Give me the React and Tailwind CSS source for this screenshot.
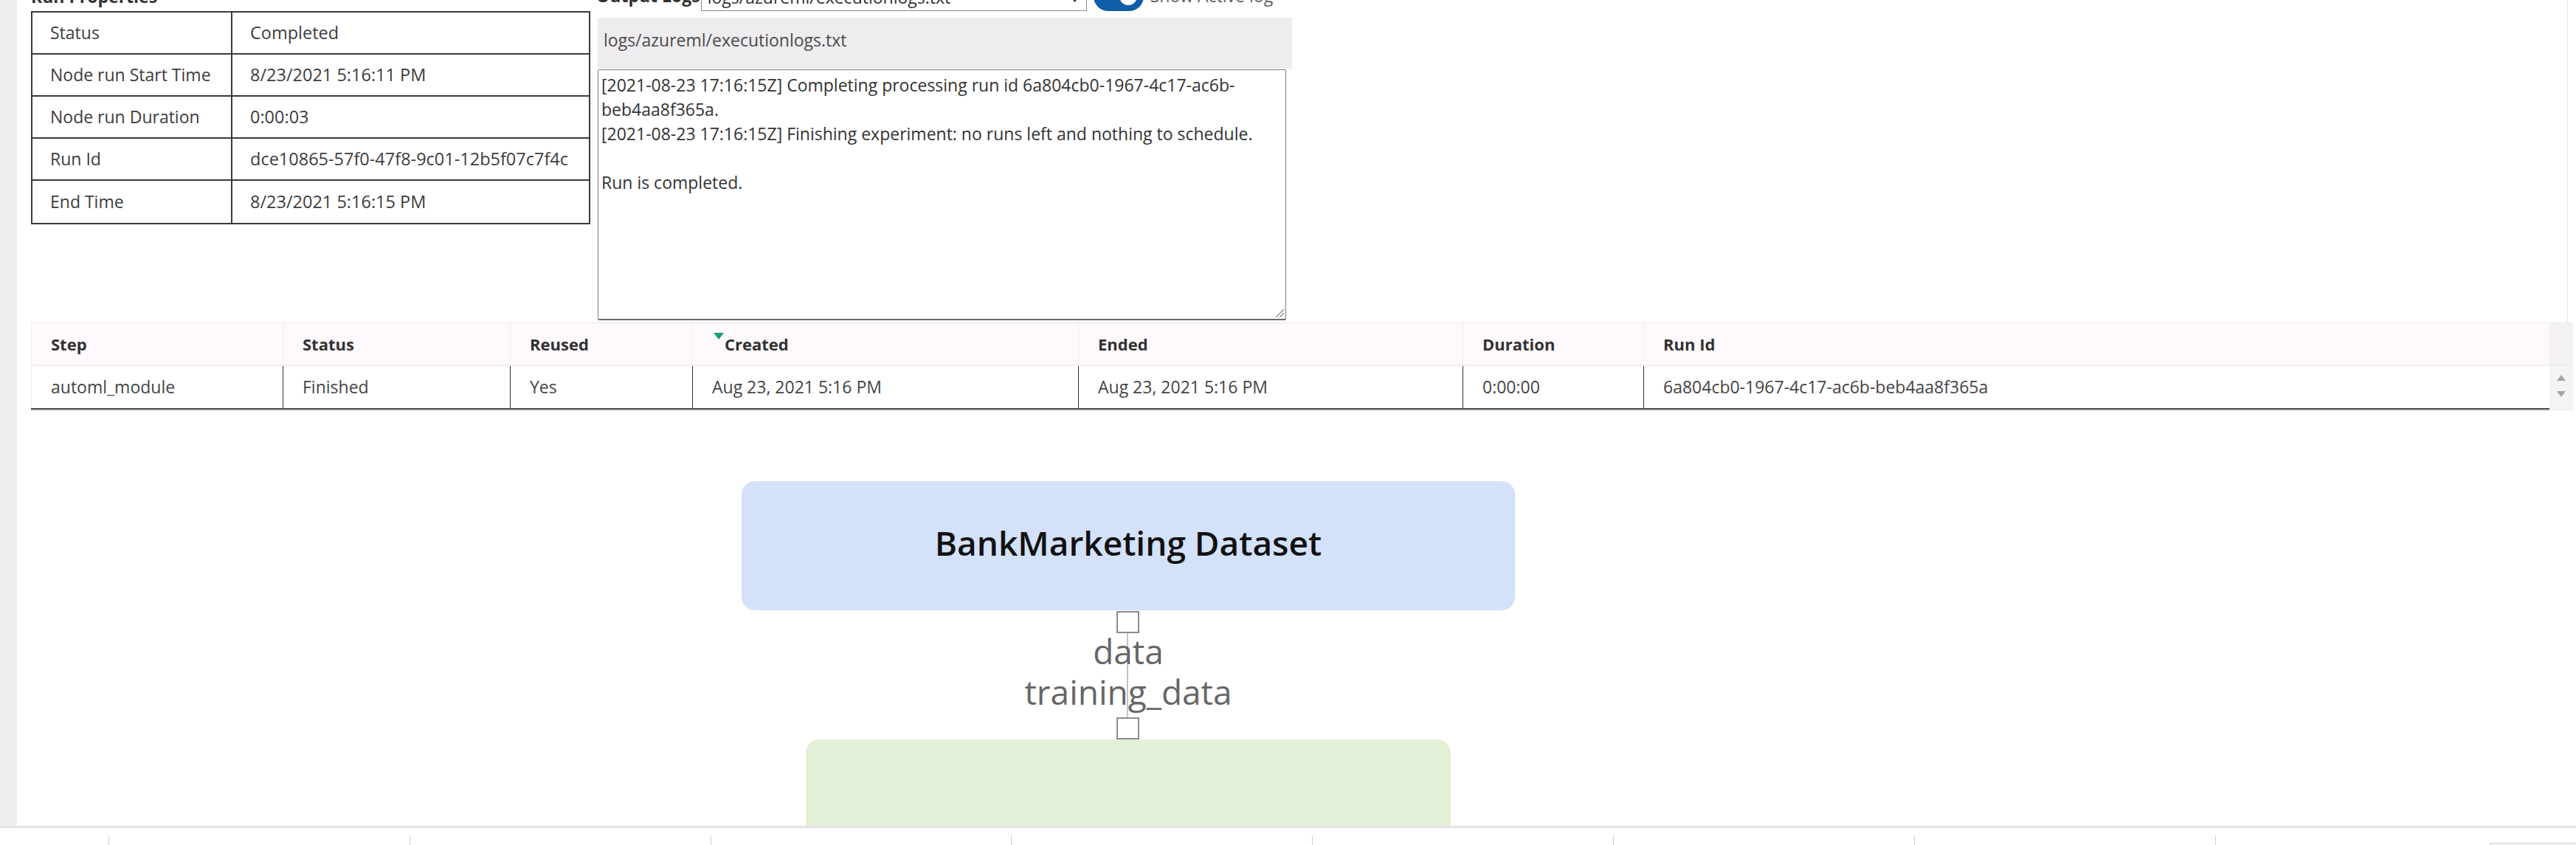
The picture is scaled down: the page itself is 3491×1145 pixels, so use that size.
import React from "react";

const runProps = [
  ["Status", "Completed"],
  ["Node run Start Time", "8/23/2021 5:16:11 PM"],
  ["Node run Duration", "0:00:03"],
  ["Run Id", "dce10865-57f0-47f8-9c01-12b5f07c7f4c"],
  ["End Time", "8/23/2021 5:16:15 PM"],
];

const logLines = [
  "[2021-08-23 17:16:15Z] Completing processing run id 6a804cb0-1967-4c17-ac6b-",
  "beb4aa8f365a.",
  "[2021-08-23 17:16:15Z] Finishing experiment: no runs left and nothing to schedule.",
  "\u00a0",
  "Run is completed.",
];

const headers = ["Step", "Status", "Reused", "Created", "Ended", "Duration", "Run Id"];
const row = [
  "automl_module",
  "Finished",
  "Yes",
  "Aug 23, 2021 5:16 PM",
  "Aug 23, 2021 5:16 PM",
  "0:00:00",
  "6a804cb0-1967-4c17-ac6b-beb4aa8f365a",
];

function RunProperties() {
  return (
    <div className="w-[758px] flex flex-col shrink-0">
      <div className="-mt-[20px] h-[35px] leading-[30px] font-bold text-[#323130]">Run Properties</div>
      <div className="border-2 border-[#3a3a3a] flex flex-col">
        {runProps.map(([k, v], i) => (
          <div
            key={k}
            className={`flex h-[57px] ${i < runProps.length - 1 ? "border-b-2 border-[#3a3a3a]" : ""}`}
          >
            <div className="w-[271px] border-r-2 border-[#3a3a3a] flex items-center pl-[24px] whitespace-nowrap">
              {k}
            </div>
            <div className="flex-1 flex items-center pl-[24px] whitespace-nowrap text-[23.5px]">{v}</div>
          </div>
        ))}
      </div>
    </div>
  );
}

function OutputLogs() {
  return (
    <div className="ml-[8px] w-[943px] flex flex-col shrink-0">
      <div className="-mt-[25px] h-[40px] flex items-start">
        <span className="mt-[4px] leading-[30px] font-bold text-[#323130] whitespace-nowrap">Output Logs</span>
        <div className="ml-[1px] w-[523px] h-[40px] border border-[#8a8886] bg-white relative pl-[8px] pt-[3px]">
          <span className="leading-[30px] text-[#323130] whitespace-nowrap">logs/azureml/executionlogs.txt</span>
          <svg className="absolute right-[10px] top-[20px]" width="11" height="8" viewBox="0 0 11 8">
            <path d="M0 0 L11 0 L5.5 7 Z" fill="#333" />
          </svg>
        </div>
        <div className="ml-[9px] w-[68px] h-[40px] rounded-full bg-[#0f5fa8] relative shrink-0">
          <div className="absolute right-[9px] top-[8px] w-[24px] h-[24px] rounded-full bg-white" />
        </div>
        <span className="ml-[9px] mt-[4px] leading-[30px] text-[#605e5c] whitespace-nowrap">Show Active log</span>
      </div>
      <div className="mt-[9px] ml-[2px] w-[941px] h-[69px] bg-[#eeecef] pl-[8px] pt-[13px]">
        <span className="leading-[30px] text-[#4a4a4a]">logs/azureml/executionlogs.txt</span>
      </div>
      <div className="relative ml-[2px] mt-[1px] w-[933px] h-[340px] border border-[#7c7c7c] border-b-2 border-b-[#6a6a6a] rounded-[2px] bg-white pl-[4px] pt-[4px]">
        {logLines.map((l, i) => (
          <div key={i} className="leading-[33px] whitespace-nowrap text-[#333]">
            {l}
          </div>
        ))}
        <svg className="absolute right-[1px] bottom-[1px]" width="14" height="14" viewBox="0 0 14 14">
          <line x1="13" y1="2" x2="2" y2="13" stroke="#8a8a8a" strokeWidth="1.2" />
          <line x1="13" y1="7" x2="7" y2="13" stroke="#8a8a8a" strokeWidth="1.2" />
        </svg>
      </div>
    </div>
  );
}

function StepsTable() {
  const cols = "grid grid-cols-[341px_308px_247px_523px_521px_245px_1fr]";
  return (
    <div className="h-[120px] flex pl-[19px] shrink-0">
      <div className="w-[3413px] flex flex-col">
        <div className={`${cols} h-[59px] bg-[#fdf9fd] border-t border-[#ebe8ec] border-b-2 border-b-[#efecf0]`}>
          {headers.map((h, i) => (
            <div
              key={h}
              className={`flex items-center font-bold text-[22px] text-[#323130] border-l border-[#efebef] ${
                i === 3 ? "pl-[28px]" : "pl-[26px]"
              }`}
            >
              {i === 3 && (
                <svg className="-mt-[22px] mr-[1px] shrink-0" width="14" height="9" viewBox="0 0 14 9">
                  <path d="M0 0 L14 0 L7 9 Z" fill="#16a06a" />
                </svg>
              )}
              <span className="whitespace-nowrap">{h}</span>
            </div>
          ))}
        </div>
        <div className={`${cols} h-[59px] border-b-2 border-[#4a4a4a] bg-white`}>
          {row.map((c, i) => (
            <div
              key={i}
              className={`flex items-center pl-[26px] text-[#444] whitespace-nowrap border-l ${
                i === 0 ? "border-[#efebef]" : "border-[#333]"
              }`}
            >
              {c}
            </div>
          ))}
        </div>
        <div className="h-[2px] bg-[#dcdbdd]" />
      </div>
      <div className="w-[32px] flex flex-col bg-[#f5f3f6] border-t border-[#ebe8ec]">
        <div className="h-[58px] bg-[#f3f1f4] border-b-2 border-[#efecf0]" />
        <div className="flex flex-col items-center pt-[12px] gap-[14px]">
          <svg width="12" height="8" viewBox="0 0 12 8">
            <path d="M6 0 L12 8 L0 8 Z" fill="#a6a6a6" />
          </svg>
          <svg width="12" height="8" viewBox="0 0 12 8">
            <path d="M0 0 L12 0 L6 8 Z" fill="#a6a6a6" />
          </svg>
        </div>
      </div>
    </div>
  );
}

function Canvas() {
  return (
    <div className="relative flex-1 overflow-hidden bg-white">
      <div className="absolute left-[982px] top-[95px] w-[1048px] h-[175px] rounded-[18px] bg-[#d3e1fb] flex items-center justify-center pb-[8px]">
        <span className="text-[46px] font-semibold text-[#111] whitespace-nowrap">BankMarketing Dataset</span>
      </div>
      <div className="absolute left-[1504px] top-[301px] w-[2px] h-[114px] bg-[#c4c4c4]" />
      <div className="absolute left-[1490px] top-[271px] w-[31px] h-[30px] border-2 border-[#8c8c8c] bg-white" />
      <div className="absolute left-[1206px] top-[298px] w-[600px] text-center text-[46px] leading-[55px] font-medium text-[#666]">
        <div>data</div>
        <div>training_data</div>
      </div>
      <div className="absolute left-[1490px] top-[415px] w-[31px] h-[30px] border-2 border-[#8c8c8c] bg-white" />
      <div className="absolute left-[1069px] top-[445px] w-[874px] h-[300px] rounded-[18px] bg-[#e3f0d8]" />
    </div>
  );
}

function BottomBar() {
  const ticks = [0, 1, 2, 3, 4, 5, 6, 7];
  return (
    <div className="relative h-[26px] border-t-[3px] border-[#e4e2e8] flex shrink-0">
      <div className="w-[147px] shrink-0" />
      {ticks.map((t) => (
        <div key={t} className="w-[407.8px] shrink-0 mt-[10px] border-l border-[#cfcfcf]" />
      ))}
      <div className="absolute left-[3373px] top-[20px] w-[200px] h-[20px] border-t-2 border-l-2 border-[#dedde2] rounded-tl-[4px]" />
    </div>
  );
}

export default function App() {
  return (
    <div className="w-[3491px] h-[1145px] overflow-hidden bg-white flex flex-col font-['Open_Sans',sans-serif] text-[23px] text-[#3d3d3d]">
      <div className="flex h-[1119px] shrink-0">
        <div className="w-[23px] bg-[#efedf0] shrink-0" />
        <div className="flex-1 flex flex-col relative">
          <div className="h-[437px] flex pl-[19px] shrink-0 relative">
            <RunProperties />
            <OutputLogs />
            <div className="absolute left-[3456px] top-0 w-px h-[437px] bg-[#e6e4e8]" />
          </div>
          <StepsTable />
          <Canvas />
        </div>
      </div>
      <BottomBar />
    </div>
  );
}
